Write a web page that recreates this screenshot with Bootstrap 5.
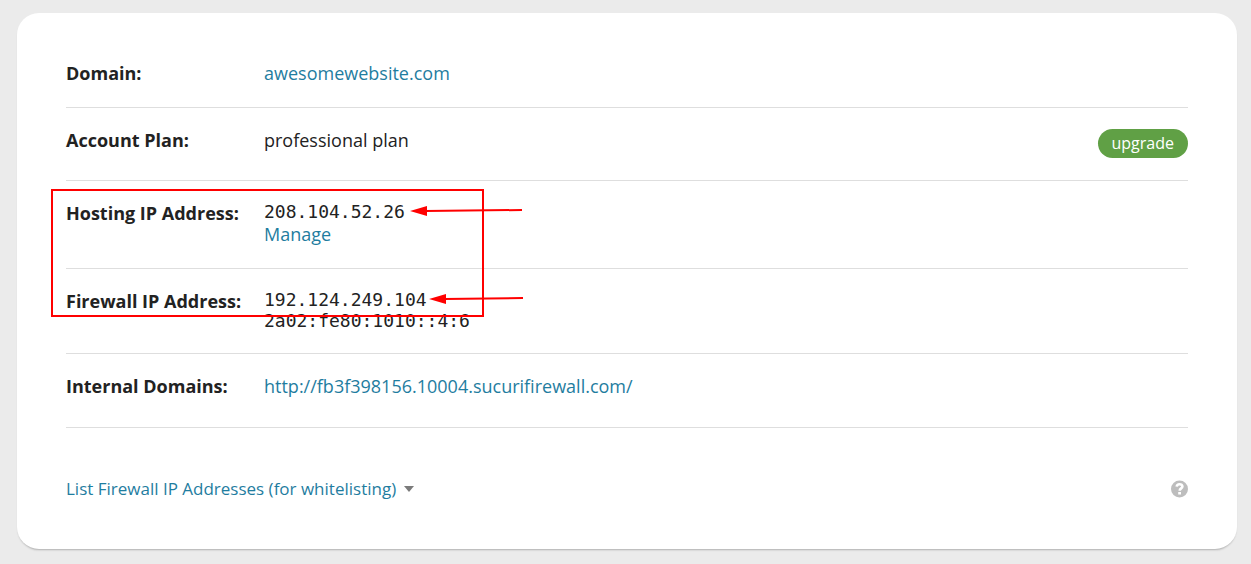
<!DOCTYPE html>
<html lang="en">
<head>
<meta charset="utf-8">
<meta name="viewport" content="width=device-width, initial-scale=1">
<title>Firewall settings</title>
<link href="https://cdn.jsdelivr.net/npm/bootstrap@5.3.0/dist/css/bootstrap.min.css" rel="stylesheet">
<style>
  body { background: #ebebeb; color: #222; font-family: "Open Sans", sans-serif; font-size: 18px; line-height: 24px; padding: 13px 14px 15px 17px; }
  .panel { border-radius: 22px; padding: 28px 49px 48px; box-shadow: 0 2px 2px -1px rgba(0, 0, 0, .25); }
  .panel a, .toggle-list { color: #1f7d9f; text-decoration: none; }
  .panel a:hover, .toggle-list:hover { text-decoration: underline; }
  .info-row { padding: 20px 0 22px; border-bottom: 1px solid #dedede; }
  .info-row dt { width: 198px; }
  .info-row dd { min-width: 0; overflow-wrap: anywhere; }
  .tall { min-height: 73px; }
  .info-row:last-child { min-height: 74px; }
  .ip { display: block; font-family: "DejaVu Sans Mono", monospace; line-height: 21px; }
  .btn-upgrade { background: #60a045; color: #fff; font-size: 16px; line-height: 21px; padding: 4px 14px; }
  .btn-upgrade:hover { background: #52893b; color: #fff; }
  .callout-marks { left: -15px; top: 8px; pointer-events: none; }
  .panel-foot { padding-top: 49px; }
  .toggle-list { font-size: 17px; line-height: 24px; }
</style>
</head>
<body>
<main class="panel bg-white">
  <dl class="mb-0">
    <div class="info-row d-flex">
      <dt class="flex-shrink-0">Domain:</dt>
      <dd class="flex-grow-1 mb-0"><a href="#">awesomewebsite.com</a></dd>
    </div>
    <div class="info-row tall d-flex">
      <dt class="flex-shrink-0">Account Plan:</dt>
      <dd class="flex-grow-1 mb-0 d-flex justify-content-between">
        <span>professional plan</span>
        <button type="button" class="btn btn-upgrade border-0 rounded-pill align-self-end">upgrade</button>
      </dd>
    </div>
    <div class="info-row d-flex position-relative">
      <dt class="flex-shrink-0">Hosting IP Address:</dt>
      <dd class="flex-grow-1 mb-0"><span class="ip">208.104.52.26</span><a href="#">Manage</a></dd>
      <!-- Highlight frame and arrows over both IP rows -->
      <svg class="callout-marks position-absolute z-1" width="473" height="128" viewBox="0 0 473 128" fill="none" stroke="#f00" stroke-width="2" aria-hidden="true">
        <rect x="1" y="1" width="431" height="126"/>
        <path d="M374 22L471 21M393 110L472 109"/>
        <path d="M359 22L376 17V27ZM378 110L395 105V115Z" fill="#f00" stroke="none"/>
      </svg>
    </div>
    <div class="info-row d-flex">
      <dt class="flex-shrink-0">Firewall IP Address:</dt>
      <dd class="flex-grow-1 mb-0"><span class="ip">192.124.249.104</span><span class="ip">2a02:fe80:1010::4:6</span></dd>
    </div>
    <div class="info-row tall d-flex">
      <dt class="flex-shrink-0">Internal Domains:</dt>
      <dd class="flex-grow-1 mb-0"><a href="#">http://fb3f398156.10004.sucurifirewall.com/</a></dd>
    </div>
  </dl>
  <div class="panel-foot d-flex justify-content-between align-items-center">
    <button type="button" class="toggle-list border-0 bg-transparent p-0 d-flex align-items-center">
      List Firewall IP Addresses (for whitelisting)
      <svg class="ms-2" width="10" height="8" viewBox="0 0 10 8" aria-hidden="true"><path d="M0 1H10L5 7Z" fill="#7b7b7b"/></svg>
    </button>
    <a href="#" class="d-flex" aria-label="Help">
      <svg width="17" height="18" viewBox="0 0 17 18" aria-hidden="true">
        <circle cx="8.500" cy="9" r="8.500" fill="#bdbdbd"/>
        <path d="M5.700 6.700C5.900 4.900 7 4.200 8.500 4.200C10.200 4.200 11.400 5.100 11.400 6.500C11.400 8.400 8.700 8.400 8.700 10.700" fill="none" stroke="#fff" stroke-width="2.600"/>
        <path d="M7.200 12H10V14.500H7.200Z" fill="#fff"/>
      </svg>
    </a>
  </div>
</main>
<script src="https://cdn.jsdelivr.net/npm/bootstrap@5.3.0/dist/js/bootstrap.bundle.min.js"></script>
</body>
</html>
